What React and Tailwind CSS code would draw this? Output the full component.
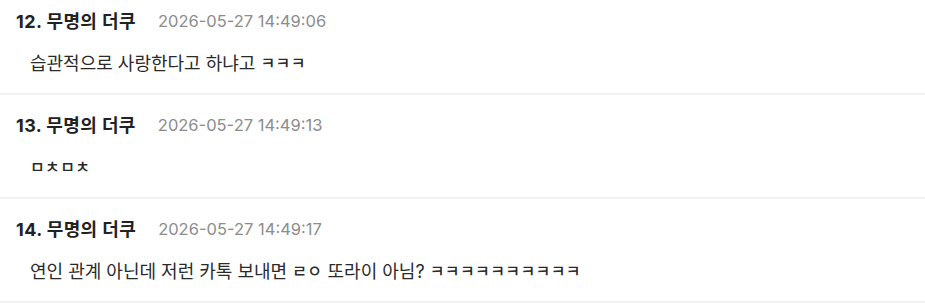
import React from "react";

const comments = [
  { no: 12, name: "무명의 더쿠", date: "2026-05-27 14:49:06", body: "습관적으로 사랑한다고 하냐고 ㅋㅋㅋ" },
  { no: 13, name: "무명의 더쿠", date: "2026-05-27 14:49:13", body: "ㅁㅊㅁㅊ" },
  { no: 14, name: "무명의 더쿠", date: "2026-05-27 14:49:17", body: "연인 관계 아닌데 저런 카톡 보내면 ㄹㅇ 또라이 아님? ㅋㅋㅋㅋㅋㅋㅋㅋㅋㅋ" },
];

// compatibility jamo (ㅋ, ㅁ, ㄹ...) render a bit narrower than full syllables
function Body({ text }) {
  const parts = text.split(/([\u3131-\u318e]+)/);
  return parts.map((p, i) =>
    i % 2 ? (
      <span key={i} className="text-[16px] font-medium tracking-[0.4px]">
        {p}
      </span>
    ) : (
      p
    )
  );
}

function CommentRow({ no, name, date, body }) {
  return (
    <li className="border-b-2 border-[#f1f1f1] px-4 pt-[18px] pb-[18px]">
      <div className="flex items-center h-6">
        <span className="text-[18px] font-bold text-[#222] tracking-[0.4px]">
          {no}. {name}
        </span>
        <span className="ml-[22px] text-[16.5px] text-[#8c8c8c]">{date}</span>
      </div>
      <p className="mt-[18px] h-6 flex items-center pl-[14px] text-[18px] text-[#2a2a2a] whitespace-pre">
        <Body text={body} />
      </p>
    </li>
  );
}

export default function App() {
  return (
    <div
      className="w-[925px] h-[304px] overflow-hidden bg-white"
      style={{ fontFamily: 'Inter, "Noto Sans CJK KR", sans-serif' }}
    >
      <ul className="-mt-[9px]">
        {comments.map((c) => (
          <CommentRow key={c.no} {...c} />
        ))}
      </ul>
    </div>
  );
}
